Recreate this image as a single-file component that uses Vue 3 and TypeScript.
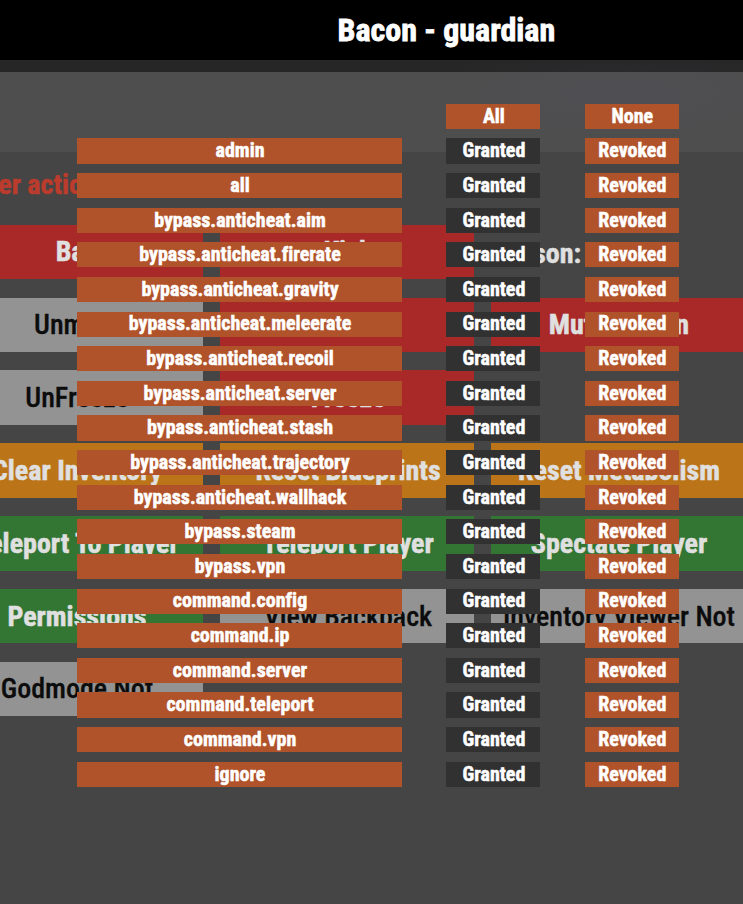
<template>
  <div class="screen">
    <div class="player-menu">
      <div class="menu-heading">
        <span class="label">Player actions</span>
      </div>
      <div class="menu-grid">
        <template v-for="(row, r) in actions" :key="r">
          <div
            v-for="(action, c) in row"
            :key="c"
            class="action"
            :class="action.kind"
          >
            <span class="label">{{ action.text }}</span>
          </div>
        </template>
      </div>
    </div>

    <div class="permissions">
      <header class="title">
        <span class="label">Bacon - guardian</span>
      </header>
      <div class="list">
        <div class="row">
          <span></span>
          <button class="cell on"><span class="label">All</span></button>
          <button class="cell on"><span class="label">None</span></button>
        </div>
        <div v-for="name in permissions" :key="name" class="row">
          <div class="cell on"><span class="label">{{ name }}</span></div>
          <button class="cell off"><span class="label">Granted</span></button>
          <button class="cell on"><span class="label">Revoked</span></button>
        </div>
      </div>
    </div>
  </div>
</template>

<script setup lang="ts">
type Kind = 'red' | 'gray' | 'orange' | 'green' | 'plain'

interface Action {
  text: string
  kind: Kind
}

const actions: Action[][] = [
  [
    { text: 'Ban', kind: 'red' },
    { text: 'Kick', kind: 'red' },
    { text: 'Reason:', kind: 'plain' },
  ],
  [
    { text: 'Unmute', kind: 'gray' },
    { text: 'Mute', kind: 'red' },
    { text: 'Mute 15 Min', kind: 'red' },
  ],
  [
    { text: 'UnFreeze', kind: 'gray' },
    { text: 'Freeze', kind: 'red' },
    { text: '', kind: 'plain' },
  ],
  [
    { text: 'Clear Inventory', kind: 'orange' },
    { text: 'Reset Blueprints', kind: 'orange' },
    { text: 'Reset Metabolism', kind: 'orange' },
  ],
  [
    { text: 'Teleport To Player', kind: 'green' },
    { text: 'Teleport Player', kind: 'green' },
    { text: 'Spectate Player', kind: 'green' },
  ],
  [
    { text: 'Permissions', kind: 'green' },
    { text: 'View Backpack', kind: 'gray' },
    { text: 'Inventory Viewer Not', kind: 'gray' },
  ],
  [{ text: 'Godmode Not', kind: 'gray' }],
]

const permissions: string[] = [
  'admin',
  'all',
  'bypass.anticheat.aim',
  'bypass.anticheat.firerate',
  'bypass.anticheat.gravity',
  'bypass.anticheat.meleerate',
  'bypass.anticheat.recoil',
  'bypass.anticheat.server',
  'bypass.anticheat.stash',
  'bypass.anticheat.trajectory',
  'bypass.anticheat.wallhack',
  'bypass.steam',
  'bypass.vpn',
  'command.config',
  'command.ip',
  'command.server',
  'command.teleport',
  'command.vpn',
  'ignore',
]
</script>

<style>
body {
  margin: 0;
  background: #454545;
}
</style>

<style scoped>
.screen {
  position: relative;
  width: 743px;
  height: 904px;
  overflow: hidden;
  font-family: "Roboto Condensed", Roboto, sans-serif;
  font-stretch: 75%;
  font-weight: 700;
  font-variant-ligatures: none;
  background:
    radial-gradient(ellipse 200px 50px at 620px 95px, rgba(80, 80, 110, 0.15), transparent),
    linear-gradient(#262626 72px, #4e4e4e 72px, #4e4e4e 152px, #454545 152px);
}

.label {
  flex: none;
  white-space: nowrap;
  -webkit-text-stroke: 0.5px currentColor;
}

.player-menu {
  width: 796px;
  margin-left: -51px;
  padding-top: 152px;
  font-size: 28px;
}

.menu-heading {
  display: flex;
  align-items: center;
  height: 64px;
  padding: 0 0 8.7px 1px;
  color: #bb3c2c;
}

.menu-grid {
  display: grid;
  grid-template-columns: repeat(3, 254px);
  grid-auto-rows: 54.6px;
  gap: 18.23px 17px;
}

.action {
  display: flex;
  align-items: center;
  justify-content: center;
  padding-left: 2px;
  color: #e0e0e0;
  overflow: hidden;
}

.red { background: #a82928; }
.orange { background: #bc7419; }
.green { background: #337532; }

.gray {
  font-weight: 500;
  color: #0c0c0c;
  background: #939393;
}

.gray .label {
  -webkit-text-stroke-width: 0.3px;
}

.plain {
  justify-content: flex-start;
  padding: 4px 0 0;
}

.permissions {
  position: absolute;
  inset: 0;
}

.title {
  display: flex;
  align-items: center;
  height: 60px;
  padding-left: 337.5px;
  font-size: 32px;
  color: #fff;
  background: #000;
}

.title .label {
  -webkit-text-stroke-width: 0.8px;
}

.list {
  display: grid;
  grid-auto-rows: 25.11px;
  row-gap: 9.517px;
  padding: 43.79px 0 0 77px;
}

.row {
  display: grid;
  grid-template-columns: 325px 94px 94px;
  column-gap: 44.4px;
}

.cell {
  display: flex;
  align-items: center;
  justify-content: center;
  padding: 0 0 1.4px 1px;
  border: 0;
  border-radius: 0;
  font: inherit;
  font-size: 20px;
  line-height: 1;
  font-variant-ligatures: none;
  color: #fff;
}

.on { background: #b1532a; }
.off { background: #313131; }
</style>
